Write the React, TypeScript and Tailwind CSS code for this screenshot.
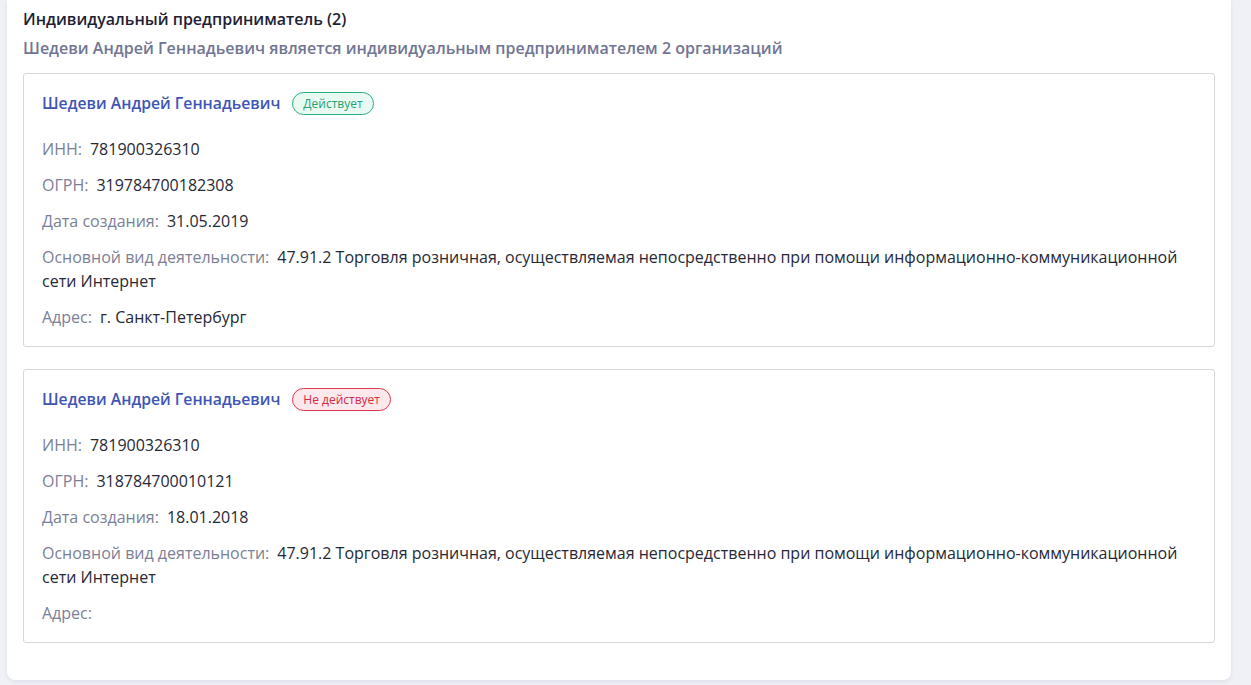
const entries = [
  {
    name: 'Шедеви Андрей Геннадьевич',
    active: true,
    inn: '781900326310',
    ogrn: '319784700182308',
    created: '31.05.2019',
    okved: '47.91.2 Торговля розничная, осуществляемая непосредственно при помощи информационно-коммуникационной сети Интернет',
    address: 'г. Санкт-Петербург',
  },
  {
    name: 'Шедеви Андрей Геннадьевич',
    active: false,
    inn: '781900326310',
    ogrn: '318784700010121',
    created: '18.01.2018',
    okved: '47.91.2 Торговля розничная, осуществляемая непосредственно при помощи информационно-коммуникационной сети Интернет',
    address: '',
  },
];

function Row({ label, value }: { label: string; value: string }) {
  return (
    <div className="mt-3 first:mt-0 text-base leading-6 text-[#262836]">
      <span className="text-[#7b8096]">{label}:</span>
      <span className="ml-2">{value}</span>
    </div>
  );
}

function Card({ e }: { e: (typeof entries)[number] }) {
  return (
    <div className="border border-[#d7d7d9] rounded-[3px] pt-[18px] pb-[17px] px-[18px]">
      <div className="flex items-center gap-3 h-[23px]">
        <span className="text-[15.75px] font-semibold text-[#3e55b5]">{e.name}</span>
        {e.active ? (
          <span className="h-[23px] px-[10px] flex items-center rounded-full border border-[#26b37f] bg-[#e9faf3] text-xs text-[#22a275]">
            Действует
          </span>
        ) : (
          <span className="h-[23px] px-[10px] flex items-center rounded-full border border-[#e0394f] bg-[#fde8ec] text-xs text-[#d22b41]">
            Не действует
          </span>
        )}
      </div>
      <div className="mt-[22px] flex flex-col">
        <Row label="ИНН" value={e.inn} />
        <Row label="ОГРН" value={e.ogrn} />
        <Row label="Дата создания" value={e.created} />
        <Row label="Основной вид деятельности" value={e.okved} />
        <Row label="Адрес" value={e.address} />
      </div>
    </div>
  );
}

export default function App() {
  return (
    <div className="min-h-screen bg-[#f0f1f7] pl-[7px] pr-5 pb-[5px] font-['Open_Sans',sans-serif]">
      <div className="bg-white rounded-b-lg shadow-[0_2px_4px_rgba(30,40,90,0.08)] px-4 pt-[9px] pb-[37px]">
        <div className="text-base font-semibold leading-5 text-[#1e2133]">Индивидуальный предприниматель (2)</div>
        <div className="mt-[9px] text-base font-semibold leading-5 text-[#717593]">
          Шедеви Андрей Геннадьевич является индивидуальным предпринимателем 2 организаций
        </div>
        <div className="mt-[15px] flex flex-col gap-[22px]">
          {entries.map((e, i) => (
            <Card key={i} e={e} />
          ))}
        </div>
      </div>
    </div>
  );
}
